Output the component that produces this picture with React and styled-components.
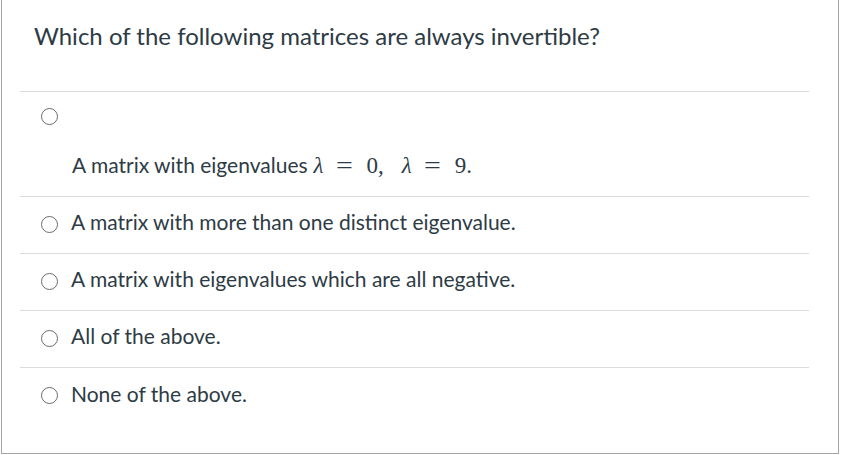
import React from "react";
import styled, { createGlobalStyle } from "styled-components";

const Global = createGlobalStyle`
  html, body { margin: 0; padding: 0; background: #fff; }
  body { font-family: Lato, "Noto Sans", sans-serif; color: #2d3b45; }
`;

const Card = styled.div`
  box-sizing: border-box;
  margin-left: 1px;
  width: 838px;
  height: 454px;
  border: 1px solid #a5a5a5;
  border-top: none;
  background: #fff;
  padding: 0 29px 0 18px;
`;

const Question = styled.div`
  font-size: 24px;
  line-height: 30px;
  padding: 21px 0 0 14px;
  height: 70px;
  border-bottom: 1px solid #dcdcdc;
  box-sizing: content-box;
`;

const List = styled.div`
  display: flex;
  flex-direction: column;
`;

const Answer = styled.label`
  box-sizing: border-box;
  display: flex;
  align-items: ${(p) => (p.$block ? "flex-start" : "center")};
  flex-direction: ${(p) => (p.$block ? "column" : "row")};
  height: ${(p) => (p.$block ? "105px" : "57px")};
  padding-bottom: ${(p) => (p.$block ? "0" : "2px")};
  border-bottom: ${(p) => (p.$last ? "none" : "1px solid #dcdcdc")};
  padding-left: 21px;
  font-size: 21px;
`;

const Radio = styled.span`
  box-sizing: border-box;
  width: 17px;
  height: 17px;
  border: 1.5px solid #6b6b6b;
  border-radius: 50%;
  flex: none;
  margin-right: 13px;
  margin-top: ${(p) => (p.$block ? "16px" : "0")};
`;

const Text = styled.span`
  padding-bottom: 5px;
`;

const BlockText = styled.div`
  margin: 28px 0 0 31px;
  line-height: 24px;
  display: flex;
  align-items: baseline;
`;

const Math = styled.span`
  font-family: "Liberation Serif", "DejaVu Serif", serif;
  font-size: 23px;
  margin-left: 6px;
  display: inline-flex;
  align-items: baseline;
`;

const Lam = styled.i`
  font-style: italic;
`;

const Eq = styled.span`
  display: inline-block;
  margin: 0 16px 0 14px;
  transform: scaleX(1.3);
`;

const Comma = styled.span`
  margin-right: 18px;
`;

export default function App() {
  return (
    <>
      <Global />
      <Card>
        <Question>Which of the following matrices are always invertible?</Question>
        <List>
          <Answer $block>
            <Radio $block />
            <BlockText>
              A matrix with eigenvalues
              <Math>
                <Lam>λ</Lam>
                <Eq>=</Eq>0<Comma>,</Comma>
                <Lam>λ</Lam>
                <Eq>=</Eq>9.
              </Math>
            </BlockText>
          </Answer>
          <Answer>
            <Radio />
            <Text>A matrix with more than one distinct eigenvalue.</Text>
          </Answer>
          <Answer>
            <Radio />
            <Text>A matrix with eigenvalues which are all negative.</Text>
          </Answer>
          <Answer>
            <Radio />
            <Text>All of the above.</Text>
          </Answer>
          <Answer $last>
            <Radio />
            <Text>None of the above.</Text>
          </Answer>
        </List>
      </Card>
    </>
  );
}
